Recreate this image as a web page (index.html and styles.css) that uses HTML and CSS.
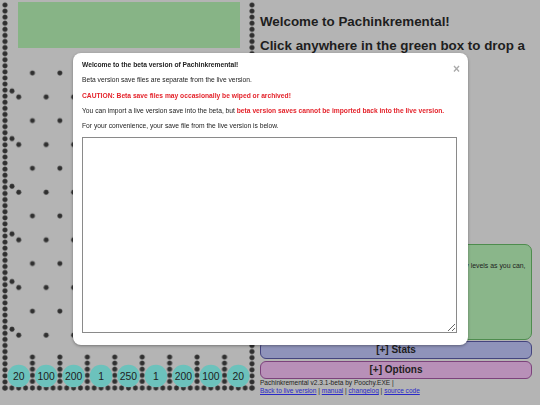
FILE: index.html
```html
<!DOCTYPE html>
<html lang="en">
<head>
<meta charset="utf-8">
<title>Pachinkremental</title>
<link rel="stylesheet" href="styles.css">
</head>
<body>
<div class="page">
  <svg class="board" width="256" height="392" viewBox="0 0 256 392">
    <defs>
      <!-- side walls: one peg column at each edge -->
      <pattern id="wallPegs" patternUnits="userSpaceOnUse" x="0" y="1.96" width="257" height="6.08">
        <circle class="peg" cx="5" cy="3.04" r="2.4"/>
        <circle class="peg" cx="252" cy="3.04" r="2.4"/>
      </pattern>
      <!-- floor row -->
      <pattern id="floorPegs" patternUnits="userSpaceOnUse" x="1.57" y="383" width="6.861" height="10">
        <circle class="peg" cx="3.43" cy="5" r="2.4"/>
      </pattern>
      <!-- bin dividers -->
      <pattern id="dividerPegs" patternUnits="userSpaceOnUse" x="-8.72" y="354" width="27.44" height="6.1">
        <circle class="peg" cx="13.72" cy="3.05" r="2.4"/>
      </pattern>
      <!-- staggered field pegs -->
      <pattern id="fieldPegs" patternUnits="userSpaceOnUse" x="12" y="61" width="27.44" height="47.64">
        <circle class="peg" cx="20.44" cy="12" r="2.4"/>
        <circle class="peg" cx="6.72" cy="36" r="2.4"/>
      </pattern>
      <!-- deflectors next to the walls -->
      <pattern id="edgePegs" patternUnits="userSpaceOnUse" x="0" y="61" width="257" height="47.64">
        <circle class="peg" cx="12" cy="30" r="2.4"/>
        <circle class="peg" cx="245" cy="30" r="2.4"/>
      </pattern>
    </defs>

    <rect class="drop-zone" x="18" y="2" width="222" height="46"/>

    <rect x="0" y="1.96" width="257" height="389" fill="url(#wallPegs)"/>
    <rect x="12" y="61" width="233" height="284" fill="url(#fieldPegs)"/>
    <rect x="0" y="61" width="257" height="284" fill="url(#edgePegs)"/>
    <rect x="20" y="354" width="220" height="30" fill="url(#dividerPegs)"/>
    <rect x="1.57" y="383" width="254" height="10" fill="url(#floorPegs)"/>

    <g class="bins">
      <circle cx="18.72" cy="376" r="11.3"/><text x="18.72" y="379.7">20</text>
      <circle cx="46.16" cy="376" r="11.3"/><text x="46.16" y="379.7">100</text>
      <circle cx="73.6" cy="376" r="11.3"/><text x="73.6" y="379.7">200</text>
      <circle cx="101.04" cy="376" r="11.3"/><text x="101.04" y="379.7">1</text>
      <circle cx="128.48" cy="376" r="11.3"/><text x="128.48" y="379.7">250</text>
      <circle cx="155.92" cy="376" r="11.3"/><text x="155.92" y="379.7">1</text>
      <circle cx="183.36" cy="376" r="11.3"/><text x="183.36" y="379.7">200</text>
      <circle cx="210.8" cy="376" r="11.3"/><text x="210.8" y="379.7">100</text>
      <circle cx="238.24" cy="376" r="11.3"/><text x="238.24" y="379.7">20</text>
    </g>
  </svg>

  <div class="side">
    <h1 class="title">Welcome to Pachinkremental!</h1>
    <h2 class="title sub">Click anywhere in the green box to drop a ball.</h2>

    <div class="panel goal">
      <p>Drop the balls into the bins to score points, and try to gain as many levels as you can, and have fun!</p>
    </div>
    <div class="panel stats">[+] Stats</div>
    <div class="panel options">[+] Options</div>
    <div class="footer">
      Pachinkremental v2.3.1-beta by Poochy.EXE |<br>
      <a href="#">Back to live version</a> | <a href="#">manual</a> | <a href="#">changelog</a> | <a href="#">source code</a>
    </div>
  </div>
</div>

<div class="modal">
  <span class="close">&times;</span>
  <p class="lead"><b>Welcome to the beta version of Pachinkremental!</b></p>
  <p>Beta version save files are separate from the live version.</p>
  <p class="warn">CAUTION: Beta save files may occasionally be wiped or archived!</p>
  <p>You can import a live version save into the beta, but <span class="warn">beta version saves cannot be imported back into the live version.</span></p>
  <p>For your convenience, your save file from the live version is below.</p>
  <textarea class="save" readonly></textarea>
</div>
</body>
</html>
```

FILE: styles.css
```css
* {
  box-sizing: border-box;
}

body {
  margin: 0;
  background: #b4b4b4;
  font-family: "Liberation Sans", Arial, sans-serif;
  color: #1e1e1e;
  overflow: hidden;
}

.page {
  display: flex;
  height: 405px;
}

/* game board */
.board {
  display: block;
  flex: none;
}

.peg {
  fill: #2f2f2f;
  stroke: #4a4a4a;
  stroke-width: 0.4;
}

.drop-zone {
  fill: #87b486;
}

.bins circle {
  fill: #6cc2bc;
}

.bins text {
  font-family: "Liberation Sans", Arial, sans-serif;
  font-size: 10.4px;
  fill: #1e1e1e;
  text-anchor: middle;
}

/* right column */
.side {
  width: 272px;
  margin-left: 4px;
  display: flex;
  flex-direction: column;
  padding-bottom: 10px;
}

.title {
  font-size: 13.36px;
  font-weight: bold;
  line-height: 15.4px;
  margin: 14px 0 8.6px;
}

.title.sub {
  margin: 0;
}

.panel {
  border-radius: 7px;
  border: 1px solid;
}

.goal {
  margin-top: auto;
  height: 96px;
  background: #8ab68a;
  border-color: #4e8c4e;
  padding: 17px 4px 4px;
  font-size: 6.9px;
  line-height: 8px;
}

.goal p {
  margin: 0;
}

.stats,
.options {
  height: 18px;
  font-size: 10px;
  font-weight: bold;
  line-height: 16px;
  text-align: center;
  border-radius: 6px;
}

.stats {
  margin-top: 1px;
  background: #8f93ba;
  border-color: #44447e;
}

.options {
  margin-top: 2px;
  background: #b890b8;
  border-color: #7c437c;
}

.footer {
  font-size: 6.55px;
  line-height: 8px;
}

.footer a {
  color: #2a2ac8;
}

/* beta notice dialog */
.modal {
  position: fixed;
  left: 73px;
  top: 53px;
  width: 395px;
  height: 292px;
  background: #fff;
  border-radius: 8px;
  box-shadow: 0 1px 3px rgba(0, 0, 0, 0.35);
  padding: 8px 11px 11px 9px;
  font-size: 6.7px;
  line-height: 8px;
  color: #222;
}

.modal p {
  margin: 0 0 7.25px;
}

.modal .lead {
  margin-right: 24px;
}

.warn {
  color: #e4232b;
  font-weight: bold;
}

.close {
  position: absolute;
  right: 8px;
  top: 12px;
  font-size: 12px;
  line-height: 8px;
  font-weight: bold;
  color: #aaa;
}

.save {
  display: block;
  width: 375px;
  height: 196px;
  margin: 0;
  padding: 2px;
  border: 1px solid #8a8a8a;
  background: #fff;
}
```
